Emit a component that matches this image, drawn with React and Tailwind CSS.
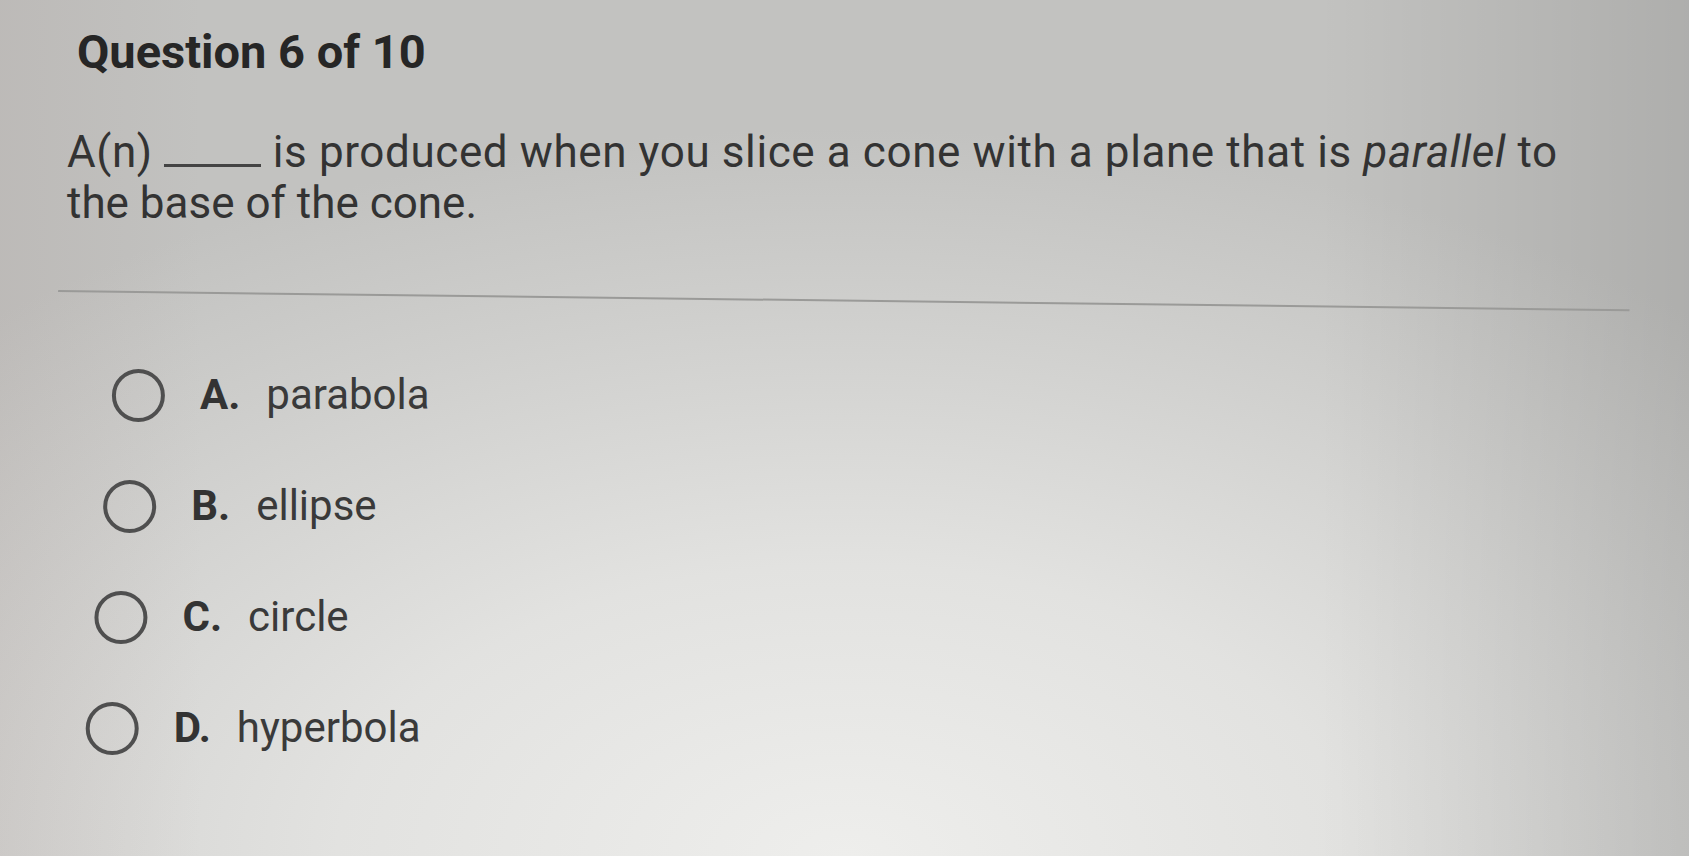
import React from "react";

const options = [
  { key: "A", text: "parabola" },
  { key: "B", text: "ellipse" },
  { key: "C", text: "circle" },
  { key: "D", text: "hyperbola" },
];

export default function App() {
  return (
    <div className="h-[856px] w-full overflow-hidden bg-[linear-gradient(to_right,rgba(150,130,125,0.12),rgba(0,0,0,0)_12%,rgba(0,0,0,0)_78%,rgba(0,0,0,0.1)),radial-gradient(ellipse_75%_85%_at_50%_100%,#eeeeec_0%,#e2e2e0_40%,#cfcfcd_75%,#c2c2c0_100%)] font-['Roboto','Liberation_Sans',sans-serif]">
      <div className="origin-top-left -skew-x-[4.5deg] pl-[81px] pr-[35px] pt-6">
        <h1 className="skew-x-[4.5deg] text-[47px] leading-[56px] font-bold text-[#262626]">
          Question 6 of 10
        </h1>
        <p className="mt-[47px] skew-x-[4.5deg] whitespace-nowrap text-[44px] leading-[51px] text-[#333333]">
          <span className="tracking-[0.6px]">
            A(n){" "}
            <span className="inline-block h-[3px] w-[97px] bg-[#444444] align-baseline" />{" "}
            is produced when you slice a cone with a plane that is{" "}
            <em className="italic">parallel</em> to
          </span>
          <br />
          the base of the cone.
        </p>
        <div className="mt-[61px] h-[2px] origin-left rotate-[0.7deg] bg-[#9a9a98]" />
        <div className="mt-[75px] flex flex-col gap-[55px] pl-[62px]">
          {options.map((o) => (
            <div key={o.key} className="flex h-[56px] skew-x-[4.5deg] items-center">
              <div className="h-[53px] w-[53px] shrink-0 rounded-full border-[4px] border-[#4f4f4f]" />
              <span className="ml-[35px] text-[42px] leading-[56px] font-bold text-[#333333]">
                {o.key}.
              </span>
              <span className="ml-[26px] text-[42px] leading-[56px] text-[#3a3a3a]">
                {o.text}
              </span>
            </div>
          ))}
        </div>
      </div>
    </div>
  );
}
